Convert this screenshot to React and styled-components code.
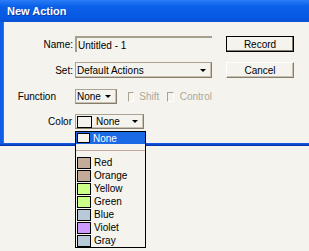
import React from 'react';
import styled, { createGlobalStyle } from 'styled-components';

const GlobalStyle = createGlobalStyle`
    html, body {
        margin: 0;
        padding: 0;
        background: #f4f3ee;
    }
    body {
        font-family: "Liberation Sans", Arial, sans-serif;
        font-size: 10px;
        color: #000;
    }
`;

const Screen = styled.div`
    position: relative;
    width: 309px;
    height: 251px;
    overflow: hidden;
    background: #f4f3ee;
`;

const TitleBar = styled.div`
    height: 22px;
    box-sizing: border-box;
    padding-left: 7px;
    display: flex;
    align-items: center;
    background: linear-gradient(180deg, #2a7cf6 0%, #0a5fe9 30%, #0758e2 80%, #0a52d4 100%);
    color: #fff;
    font-weight: bold;
    font-size: 11px;
    text-shadow: 1px 1px 0 #0a3aa8;
`;

const Frame = styled.div`
    display: flex;
    flex-direction: column;
    border-left: 3px solid #0d5ee8;
    box-shadow: inset 1px 0 0 #2a74f4;
`;

const Body = styled.div`
    height: 121px;
    box-sizing: border-box;
    padding-top: 14px;
    display: flex;
`;

const BottomEdge = styled.div`
    height: 3px;
    margin-left: -3px;
    background: linear-gradient(180deg, #1a62ee 0%, #0a48cc 50%, #00309e 100%);
`;

const Form = styled.div`
    width: 209px;
    display: flex;
    flex-direction: column;
`;

const Row = styled.div`
    display: flex;
    align-items: center;
    height: ${p => p.$h}px;
    margin-top: ${p => p.$top || 0}px;
    overflow: hidden;
    white-space: nowrap;
`;

const Label = styled.div`
    width: 70px;
    flex: 0 0 70px;
    box-sizing: border-box;
    text-align: right;
    padding-right: ${p => p.$inset || 0}px;
    margin-right: 2px;
`;

const TextField = styled.div`
    width: 137px;
    height: 16px;
    box-sizing: border-box;
    border-top: 2px solid #a59e8f;
    border-left: 2px solid #a59e8f;
    padding-left: 1px;
    display: flex;
    align-items: center;
`;

const Select = styled.div`
    width: ${p => p.$w}px;
    height: ${p => p.$h}px;
    box-sizing: border-box;
    border: 1px solid;
    border-color: #aaa394 #877d6d #877d6d #aaa394;
    box-shadow: inset -1px -1px 0 #c8c1b2;
    padding: 0 4px 0 1px;
    display: flex;
    align-items: center;
    gap: 4px;
`;

const SelectText = styled.span`
    flex: 1;
`;

const Arrow = styled.span`
    width: 0;
    height: 0;
    border-left: 3px solid transparent;
    border-right: 3px solid transparent;
    border-top: 3px solid #000;
    margin-right: ${p => p.$right || 0}px;
`;

const Swatch = styled.span`
    width: ${p => p.$w || 14}px;
    height: ${p => p.$h || 11}px;
    box-sizing: border-box;
    flex: 0 0 auto;
    background: ${p => p.$color};
    border: 1px solid #000;
`;

const Check = styled.span`
    width: 9px;
    height: 10px;
    box-sizing: border-box;
    border: 1px solid;
    border-color: #a8a293 #fff #fff #a8a293;
    margin-left: ${p => p.$left}px;
    margin-right: ${p => p.$right}px;
`;

const Disabled = styled.span`
    color: #aca899;
`;

const Buttons = styled.div`
    margin-left: 14px;
    display: flex;
    flex-direction: column;
    gap: 10px;
`;

const Button = styled.div`
    width: 68px;
    height: 16px;
    box-sizing: border-box;
    display: flex;
    align-items: center;
    justify-content: center;
    border: 1px solid;
    border-color: ${p => p.$default ? '#000' : '#fff #877d6d #877d6d #fff'};
    box-shadow: ${p => p.$default ? 'inset -1px -1px 0 #877d6d' : 'inset -1px -1px 0 #c8c1b2'};
`;

const List = styled.div`
    position: absolute;
    left: 75px;
    top: 131px;
    width: 71px;
    height: 117px;
    box-sizing: border-box;
    border: 1px solid #000;
    background: #f4f3ee;
    display: flex;
    flex-direction: column;
`;

const Item = styled.div`
    height: ${p => p.$h || 13}px;
    display: flex;
    align-items: center;
    gap: 3px;
    padding-left: 1px;
    background: ${p => p.$selected ? '#1a6ae6' : 'transparent'};
    color: ${p => p.$selected ? '#fff' : '#000'};
`;

const Separator = styled.div`
    height: 1px;
    margin: 6px 0 5px;
    background: #c4a898;
`;

const colors = [
    { name: 'Red', color: '#c4aa98' },
    { name: 'Orange', color: '#c4aa98' },
    { name: 'Yellow', color: '#ccff88' },
    { name: 'Green', color: '#ccff88' },
    { name: 'Blue', color: '#b6cad8' },
    { name: 'Violet', color: '#cc99ff' },
    { name: 'Gray', color: '#b6cad8' },
];

export default function App() {
    return (
        <Screen>
            <GlobalStyle />
            <TitleBar>New Action</TitleBar>
            <Frame>
                <Body>
                    <Form>
                        <Row $h={16}>
                            <Label>Name:</Label>
                            <TextField>Untitled - 1</TextField>
                        </Row>
                        <Row $h={16} $top={10}>
                            <Label>Set:</Label>
                            <Select $w={137} $h={16}>
                                <SelectText>Default Actions</SelectText>
                                <Arrow $right={1} />
                            </Select>
                        </Row>
                        <Row $h={15} $top={11}>
                            <Label $inset={17}>Function</Label>
                            <Select $w={42} $h={15}>
                                <SelectText>None</SelectText>
                                <Arrow $right={1} />
                            </Select>
                            <Check $left={11} $right={5} />
                            <Disabled>Shift</Disabled>
                            <Check $left={8} $right={6} />
                            <Disabled>Control</Disabled>
                        </Row>
                        <Row $h={15} $top={10}>
                            <Label $inset={1}>Color</Label>
                            <Select $w={69} $h={15}>
                                <Swatch $w={15} $h={12} $color="#f4f3ee" />
                                <SelectText>None</SelectText>
                                <Arrow $right={1} />
                            </Select>
                        </Row>
                    </Form>
                    <Buttons>
                        <Button $default>Record</Button>
                        <Button>Cancel</Button>
                    </Buttons>
                </Body>
                <BottomEdge />
            </Frame>
            <List>
                <Item $selected $h={12}>
                    <Swatch $w={13} $h={10} $color="#f4f3ee" />
                    None
                </Item>
                <Separator />
                {colors.map(c => (
                    <Item key={c.name}>
                        <Swatch $color={c.color} $h={12} />
                        {c.name}
                    </Item>
                ))}
            </List>
        </Screen>
    );
}
